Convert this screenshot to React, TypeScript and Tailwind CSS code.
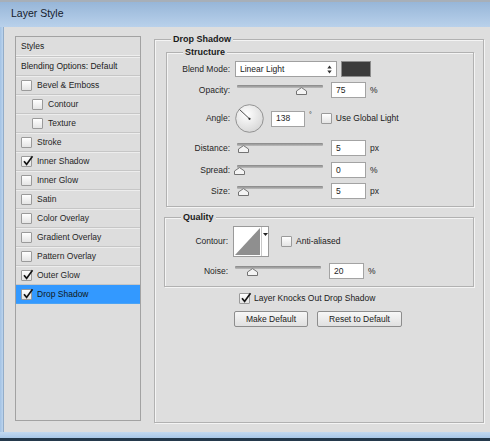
import React from "react";

const styleItems = [
  { label: "Bevel & Emboss", checked: false, sub: false },
  { label: "Contour", checked: false, sub: true },
  { label: "Texture", checked: false, sub: true },
  { label: "Stroke", checked: false, sub: false },
  { label: "Inner Shadow", checked: true, sub: false },
  { label: "Inner Glow", checked: false, sub: false },
  { label: "Satin", checked: false, sub: false },
  { label: "Color Overlay", checked: false, sub: false },
  { label: "Gradient Overlay", checked: false, sub: false },
  { label: "Pattern Overlay", checked: false, sub: false },
  { label: "Outer Glow", checked: true, sub: false },
  { label: "Drop Shadow", checked: true, sub: false, active: true },
];

function Check({ checked }: { checked?: boolean }) {
  return (
    <span className="relative w-[11px] h-[11px] shrink-0 border border-[#9a9a9a] rounded-[1px] bg-linear-to-b from-white to-[#e4e4e4]">
      {checked && (
        <svg viewBox="0 0 12 12" className="absolute -top-[2px] left-0 w-[12px] h-[12px]">
          <path d="M2 6.2 L4.6 9.4 L10.5 1.2" stroke="#141414" strokeWidth="1.7" fill="none" />
        </svg>
      )}
    </span>
  );
}

function Slider({ pos }: { pos: number }) {
  return (
    <div className="relative w-[90px] h-[16px] shrink-0">
      <div className="absolute top-[3px] left-[2px] w-[86px] h-[3px] rounded-[1px] bg-linear-to-b from-[#868686] to-[#bdbdbd]" />
      <svg
        viewBox="0 0 11 8"
        className="absolute top-[5px] w-[11px] h-[8px]"
        style={{ left: pos }}
      >
        <path d="M0.5 7.5 L0.5 4 L5.5 0.6 L10.5 4 L10.5 7.5 Z" fill="#f4f4f4" stroke="#737373" strokeWidth="1" />
      </svg>
    </div>
  );
}

function NumField({ value, w = "w-[35px]" }: { value: string; w?: string }) {
  return (
    <div className={`${w} h-[16px] shrink-0 bg-white border border-[#a3a3a3] pl-[4px] flex items-center text-[8.5px] text-[#1e1e1e]`}>
      {value}
    </div>
  );
}

function Label({ children }: { children: React.ReactNode }) {
  return <div className="w-[63px] shrink-0 text-right text-[8.5px] text-[#252525]">{children}</div>;
}

function Group({ title, className, children }: { title: string; className: string; children: React.ReactNode }) {
  return (
    <div className={`border border-[#b1b1b1] shadow-[inset_1px_1px_0_#f4f4f4,1px_1px_0_#f4f4f4] ${className}`}>
      <div className="-mt-[6px] ml-[16px] w-fit px-[2px] bg-[#dedede] text-[9px] leading-[11px] font-bold text-[#1a1a1a]">
        {title}
      </div>
      {children}
    </div>
  );
}

export default function App() {
  return (
    <div className="w-[490px] h-[441px] flex flex-col overflow-hidden bg-[#dedede] font-['Liberation_Sans',Arial,sans-serif] text-[#252525]">
      {/* Title bar */}
      <div className="h-[27px] shrink-0 border-t-[2px] border-[#a7afb8] bg-linear-to-b from-[#97b6d8] to-[#b9d1eb] pl-[11px] flex items-center">
        <span className="text-[10.5px] text-[#15202c] -mt-[1px]">Layer Style</span>
      </div>

      <div className="flex flex-1 min-h-0">
        <div className="w-[4px] shrink-0 bg-linear-to-r from-[#a3c2e4] to-[#bcd4ed] border-r border-[#93adc9]" />

        <div className="flex-1 flex pt-[9px] pl-[11px] gap-[13px]">
          {/* Styles list */}
          <div className="w-[126px] h-[385px] shrink-0 border border-[#a2a2a2] bg-[#dddddd] flex flex-col">
            <div className="h-[20px] shrink-0 border-b border-[#c6c6c6] shadow-[inset_0_-1px_0_#eeeeee] pl-[5px] flex items-center text-[8.5px] text-[#1a1a1a]">
              Styles
            </div>
            <div className="h-[19px] shrink-0 border-b border-[#c6c6c6] shadow-[inset_0_1px_0_#ededed] pl-[5px] flex items-center text-[8.5px] text-[#1a1a1a]">
              Blending Options: Default
            </div>
            {styleItems.map((it) => (
              <div
                key={it.label}
                className={`h-[19px] shrink-0 border-b flex items-center gap-[5px] text-[8.5px] ${
                  it.sub ? "pl-[16px]" : "pl-[5px]"
                } ${
                  it.active
                    ? "bg-[#3399ff] border-[#4aa3f5] text-[#101820]"
                    : "border-[#c6c6c6] shadow-[inset_0_1px_0_#ededed] text-[#252525]"
                }`}
              >
                <Check checked={it.checked} />
                <span>{it.label}</span>
              </div>
            ))}
          </div>

          {/* Settings */}
          <div className="pt-[3px]">
            <Group title="Drop Shadow" className="w-[330px] h-[384px]">
              <Group title="Structure" className="mt-[7px] ml-[11px] w-[308px] h-[155px]">
                <div className="flex flex-col">
                  <div className="mt-[3px] h-[16px] flex items-center gap-[5px]">
                    <Label>Blend Mode:</Label>
                    <div className="w-[102px] h-[16px] bg-white border border-[#a0a0a0] pl-[4px] pr-[4px] flex items-center justify-between text-[8.5px] text-[#1a1a1a]">
                      <span>Linear Light</span>
                      <svg viewBox="0 0 5 9" className="w-[5px] h-[9px]">
                        <path d="M0.3 3.6 L2.5 0.6 L4.7 3.6 Z M0.3 5.4 L2.5 8.4 L4.7 5.4 Z" fill="#333" />
                      </svg>
                    </div>
                    <div className="ml-[-1px] w-[30px] h-[16px] bg-[#3b3b3b] border border-[#8c8c8c]" />
                  </div>

                  <div className="mt-[5px] h-[16px] flex items-center gap-[5px]">
                    <Label>Opacity:</Label>
                    <Slider pos={61} />
                    <div className="ml-[1px] flex items-center gap-[4px]">
                      <NumField value="75" />
                      <span className="text-[8.5px]">%</span>
                    </div>
                  </div>

                  <div className="mt-[6px] h-[29px] flex items-center gap-[5px]">
                    <Label>Angle:</Label>
                    <svg viewBox="0 0 29 29" className="w-[29px] h-[29px] shrink-0">
                      <defs>
                        <radialGradient id="dial" cx="40%" cy="35%" r="70%">
                          <stop offset="0%" stopColor="#ffffff" />
                          <stop offset="100%" stopColor="#d6d6d6" />
                        </radialGradient>
                      </defs>
                      <circle cx="14.5" cy="14.5" r="13.8" fill="url(#dial)" stroke="#8a8a8a" strokeWidth="0.9" />
                      <line x1="14.5" y1="14.8" x2="4.6" y2="5.6" stroke="#3a3a3a" strokeWidth="0.9" />
                      <circle cx="14.5" cy="14.8" r="1.1" fill="#2a2a2a" />
                    </svg>
                    <div className="ml-[2px] flex items-center">
                      <NumField value="138" w="w-[34px]" />
                      <span className="ml-[4px] -mt-[7px] text-[7px]">°</span>
                      <span className="ml-[9px] flex items-center gap-[4px]">
                        <Check />
                        <span className="text-[8.5px] text-[#1a1a1a]">Use Global Light</span>
                      </span>
                    </div>
                  </div>

                  <div className="mt-[7px] h-[16px] flex items-center gap-[5px]">
                    <Label>Distance:</Label>
                    <Slider pos={3} />
                    <div className="ml-[1px] flex items-center gap-[4px]">
                      <NumField value="5" />
                      <span className="text-[8.5px]">px</span>
                    </div>
                  </div>

                  <div className="mt-[6px] h-[16px] flex items-center gap-[5px]">
                    <Label>Spread:</Label>
                    <Slider pos={-1} />
                    <div className="ml-[1px] flex items-center gap-[4px]">
                      <NumField value="0" />
                      <span className="text-[8.5px]">%</span>
                    </div>
                  </div>

                  <div className="mt-[5px] h-[16px] flex items-center gap-[5px]">
                    <Label>Size:</Label>
                    <Slider pos={3} />
                    <div className="ml-[1px] flex items-center gap-[4px]">
                      <NumField value="5" />
                      <span className="text-[8.5px]">px</span>
                    </div>
                  </div>
                </div>
              </Group>

              <Group title="Quality" className="mt-[10px] ml-[9px] w-[310px] h-[70px]">
                <div className="flex flex-col">
                  <div className="mt-[3px] h-[31px] flex items-center gap-[5px]">
                    <Label>Contour:</Label>
                    <div className="w-[36px] h-[31px] shrink-0 bg-white border border-[#9a9a9a] flex">
                      <svg viewBox="0 0 27 29" className="w-[27px] h-[29px]">
                        <path d="M1 28 L26 1 L26 28 Z" fill="#8f8f8f" />
                      </svg>
                      <div className="flex-1 border-l border-[#c8c8c8] pt-[6px] flex justify-center">
                        <svg viewBox="0 0 5 3" className="w-[5px] h-[3px]">
                          <path d="M0 0 L5 0 L2.5 3 Z" fill="#222" />
                        </svg>
                      </div>
                    </div>
                    <span className="ml-[7px] flex items-center gap-[4px]">
                      <Check />
                      <span className="text-[8.5px] text-[#1a1a1a]">Anti-aliased</span>
                    </span>
                  </div>

                  <div className="mt-[6px] h-[16px] flex items-center gap-[5px]">
                    <Label>Noise:</Label>
                    <Slider pos={14} />
                    <div className="ml-[1px] flex items-center gap-[4px]">
                      <NumField value="20" />
                      <span className="text-[8.5px]">%</span>
                    </div>
                  </div>
                </div>
              </Group>

              <div className="mt-[4px] ml-[84px] h-[14px] flex items-center gap-[4px]">
                <Check checked />
                <span className="text-[8.5px] text-[#1a1a1a]">Layer Knocks Out Drop Shadow</span>
              </div>

              <div className="mt-[6px] ml-[79px] flex gap-[9px]">
                <button className="w-[74px] h-[16px] border border-[#8d8d8d] rounded-[2px] bg-linear-to-b from-[#f7f7f7] to-[#e0e0e0] text-[8.5px] text-[#1a1a1a]">
                  Make Default
                </button>
                <button className="w-[85px] h-[16px] border border-[#8d8d8d] rounded-[2px] bg-linear-to-b from-[#f7f7f7] to-[#e0e0e0] text-[8.5px] text-[#1a1a1a]">
                  Reset to Default
                </button>
              </div>
            </Group>
          </div>
        </div>
      </div>

      <div className="h-[9px] shrink-0 flex flex-col">
        <div className="h-[6px] bg-linear-to-b from-[#c3daf1] to-[#a9c8e8]" />
        <div className="h-[3px] bg-[#24394c]" />
      </div>
    </div>
  );
}
